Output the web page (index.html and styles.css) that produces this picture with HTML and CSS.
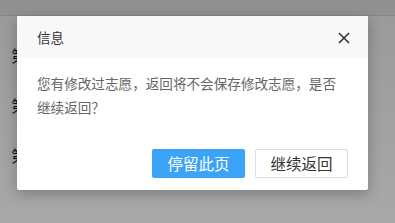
FILE: index.html
```html
<!DOCTYPE html>
<html lang="zh-CN">
<head>
    <meta charset="UTF-8">
    <title>信息</title>
    <link rel="stylesheet" href="styles.css">
</head>
<body>

    <!-- 底层页面 (被弹窗挡住) -->
    <div class="page">
        <div class="topbar"></div>
        <ul class="list">
            <li>第</li>
            <li>第</li>
            <li>第</li>
        </ul>
    </div>

    <!-- 遮罩 + 弹窗 -->
    <div class="mask">
        <div class="dialog">
            <div class="dialog-head">
                <span class="dialog-title">信息</span>
                <span class="dialog-close">
                    <svg width="12" height="12" viewBox="0 0 12 12">
                        <path d="M1 1 L11 11 M11 1 L1 11" stroke="#333" stroke-width="1.6" fill="none"/>
                    </svg>
                </span>
            </div>
            <div class="dialog-body">
                您有修改过志愿，返回将不会保存修改志愿，是否继续返回？
            </div>
            <div class="dialog-btns">
                <div class="btn btn-blue">停留此页</div>
                <div class="btn btn-white">继续返回</div>
            </div>
        </div>
    </div>

</body>
</html>
```

FILE: styles.css
```css
body{
    margin: 0;
    width: 395px;
    height: 223px;
    overflow: hidden;
    position: relative;
    font-family: "Noto Sans CJK SC", "Liberation Sans", sans-serif;
    background-color: #fff;
}

ul{
    list-style: none;
    margin: 0;
    padding: 0;
}

.page{
    height: 223px;
}

.topbar{
    height: 15px;
    background-color: #f0f0f0;
    border-bottom: 1px solid #e0e0e0;
}

.list{
    margin-top: 14px;
}

.list li{
    height: 50px;
    line-height: 50px;
    padding-left: 11px;
    font-size: 16px;
    color: #111;
}

.mask{
    position: absolute;
    top: 0;
    left: 0;
    right: 0;
    bottom: 0;
    background: linear-gradient(to bottom, rgba(0,0,0,0.4), rgba(0,0,0,0.34));
    padding: 16px 0 0 17px;
}

.dialog{
    width: 351px;
    height: 174px;
    background-color: #fff;
    border-radius: 2px;
    box-shadow: 0 4px 14px rgba(0,0,0,0.25);
}

.dialog-head{
    height: 42px;
    background-color: #f8f8f8;
    display: flex;
    align-items: center;
    justify-content: space-between;
    padding: 0 18px 0 20px;
}

.dialog-title{
    font-size: 13.5px;
    color: #333;
}

.dialog-close{
    display: flex;
    margin-top: 1px;
}

.dialog-body{
    padding: 13px 20px 0 20px;
    height: 78px;
    box-sizing: border-box;
    font-size: 13.6px;
    line-height: 24px;
    color: #666;
}

.dialog-btns{
    display: flex;
    justify-content: flex-end;
    gap: 10px;
    padding: 13px 20px 0 0;
}

.btn{
    width: 93px;
    height: 29px;
    line-height: 29px;
    box-sizing: border-box;
    text-align: center;
    font-size: 15.5px;
    border-radius: 2px;
}

.btn-blue{
    background-color: #3ba4f6;
    color: #fff;
}

.btn-white{
    background-color: #fff;
    border: 1px solid #dedede;
    line-height: 27px;
    color: #333;
}
```
